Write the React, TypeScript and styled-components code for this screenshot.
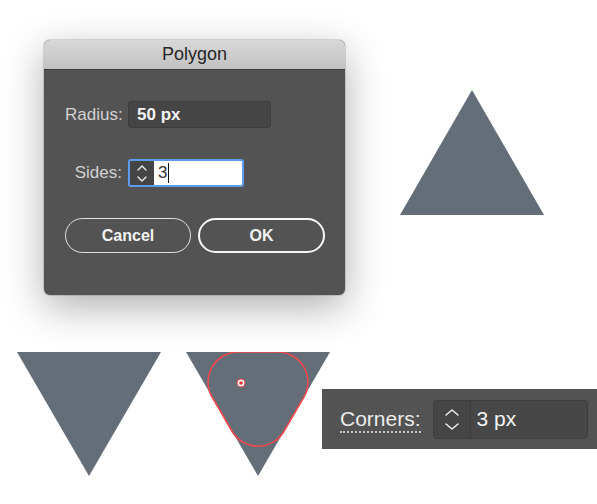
import React, { FC } from 'react';
import styled, { createGlobalStyle } from 'styled-components';

const GlobalStyle = createGlobalStyle`
  html, body {
    margin: 0;
    padding: 0;
    background: #ffffff;
    overflow: hidden;
  }
  body {
    font-family: "Liberation Sans", Arial, sans-serif;
  }
`;

const SHAPE = '#636e79';

const Page = styled.div`
  width: 597px;
  height: 504px;
  display: flex;
  flex-direction: column;
`;

const TopRow = styled.div`
  display: flex;
  align-items: flex-start;
  padding: 40px 0 0 44px;
`;

const BottomRow = styled.div`
  display: flex;
  align-items: flex-start;
  padding: 57px 0 0 17px;
  gap: 25px;
`;

const Dialog = styled.div`
  width: 301px;
  border-radius: 6px;
  overflow: hidden;
  background: #535353;
  box-shadow: 0 12px 40px rgba(0, 0, 0, 0.32), 0 0 0 1px rgba(0, 0, 0, 0.12);
`;

const TitleBar = styled.div`
  height: 29px;
  display: flex;
  align-items: center;
  justify-content: center;
  background: linear-gradient(#d8d8d8, #c2c2c2);
  border-bottom: 1px solid #3c3c3c;
  font-size: 18px;
  color: #262626;
`;

const Body = styled.div`
  padding: 31px 20px 42px 21px;
  display: flex;
  flex-direction: column;
  gap: 31px;
`;

const Fields = styled.div`
  display: grid;
  grid-template-columns: 57px auto;
  column-gap: 6px;
  row-gap: 31px;
  align-items: center;
`;

const Label = styled.label`
  text-align: right;
  font-size: 17px;
  color: #d2d2d2;
  white-space: nowrap;
`;

const TextField = styled.div<{ $width: number }>`
  width: ${({ $width }) => $width}px;
  height: 27px;
  box-sizing: border-box;
  background: #454545;
  border: 1px solid #3d3d3d;
  border-radius: 3px;
  display: flex;
  align-items: center;
  padding-left: 8px;
  font-size: 17px;
  font-weight: bold;
  color: #f4f4f4;
`;

const FocusedStepper = styled.div`
  width: 116px;
  height: 28px;
  box-sizing: border-box;
  border: 2px solid #5b9cec;
  border-radius: 3px;
  display: flex;
  overflow: hidden;
`;

const StepButtons = styled.div<{ $width: number; $divider?: string }>`
  width: ${({ $width }) => $width}px;
  flex-shrink: 0;
  display: flex;
  align-items: center;
  justify-content: center;
  background: #454545;
  border-right: 1px solid ${({ $divider }) => $divider || 'transparent'};
`;

const WhiteInput = styled.div`
  flex: 1;
  background: #ffffff;
  display: flex;
  align-items: center;
  padding-left: 4px;
  font-size: 17px;
  color: #333333;
`;

const Caret = styled.span`
  display: inline-block;
  width: 1px;
  height: 20px;
  background: #111111;
  margin-left: 1px;
`;

const Buttons = styled.div`
  display: flex;
  gap: 7px;
`;

const PillButton = styled.button<{ $primary?: boolean }>`
  width: ${({ $primary }) => ($primary ? 127 : 126)}px;
  height: 35px;
  box-sizing: border-box;
  border-radius: 18px;
  background: transparent;
  border: ${({ $primary }) => ($primary ? '2px solid #f6f6f6' : '1px solid #e2e2e2')};
  color: #f2f2f2;
  font-family: inherit;
  font-size: 16px;
  font-weight: bold;
  padding: 0;
`;

const TriangleSvg = styled.svg<{ $mt?: number; $ml?: number }>`
  display: block;
  flex-shrink: 0;
  margin-top: ${({ $mt }) => $mt || 0}px;
  margin-left: ${({ $ml }) => $ml || 0}px;
`;

const CornersPanel = styled.div`
  margin-top: 37px;
  margin-left: -33px;
  flex: 1;
  height: 60px;
  background: #535353;
  display: flex;
  align-items: center;
  padding-left: 18px;
  gap: 12px;
`;

const CornersLabel = styled.span`
  font-size: 21px;
  color: #ececec;
  line-height: 22px;
  border-bottom: 2px dotted #c8c8c8;
  padding-bottom: 1px;
  margin-top: 3px;
`;

const CornersField = styled.div`
  width: 155px;
  height: 39px;
  box-sizing: border-box;
  background: #474747;
  border: 1px solid #3d3d3d;
  border-radius: 4px;
  display: flex;
  overflow: hidden;
`;

const CornersValue = styled.div`
  flex: 1;
  display: flex;
  align-items: center;
  padding-left: 6px;
  font-size: 21px;
  color: #f4f4f4;
`;

const Chevrons: FC<{ w: number; h: number; gap: number; stroke?: number }> = ({ w, h, gap, stroke = 1.3 }) => {
  const total = h * 2 + gap;
  return (
    <svg width={w + 2} height={total + 2} viewBox={`-1 -1 ${w + 2} ${total + 2}`}>
      <path
        d={`M0 ${h} L${w / 2} 0 L${w} ${h} M0 ${h + gap} L${w / 2} ${total} L${w} ${h + gap}`}
        fill="none"
        stroke="#f0f0f0"
        strokeWidth={stroke}
        strokeLinecap="round"
        strokeLinejoin="round"
      />
    </svg>
  );
};

const UpTriangle: FC = () => (
  <TriangleSvg width="144" height="125" viewBox="0 0 144 125" $mt={50} $ml={55}>
    <polygon points="72,0 144,125 0,125" fill={SHAPE} />
  </TriangleSvg>
);

const DownTriangle: FC<{ rounded?: boolean }> = ({ rounded }) => (
  <TriangleSvg width="144" height="124" viewBox="0 0 144 124">
    <polygon points="0,0 144,0 72,124" fill={SHAPE} />
    {rounded && (
      <>
        <path
          d="M52 0 L92 0 A30 30 0 0 1 117.9 45 L98.1 79 A30 30 0 0 1 45.9 79 L26.1 45 A30 30 0 0 1 52 0 Z"
          fill="none"
          stroke="#f0484d"
          strokeWidth="1.6"
        />
        <circle cx="55" cy="31" r="4" fill="#ffffff" stroke="#f0484d" strokeWidth="1" />
        <circle cx="55" cy="31" r="1.8" fill="#e8343a" />
      </>
    )}
  </TriangleSvg>
);

export default function App() {
  return (
    <>
      <GlobalStyle />
      <Page>
        <TopRow>
          <Dialog>
            <TitleBar>Polygon</TitleBar>
            <Body>
              <Fields>
                <Label>Radius:</Label>
                <TextField $width={143}>50 px</TextField>
                <Label>Sides:</Label>
                <FocusedStepper>
                  <StepButtons $width={23}>
                    <Chevrons w={8} h={4} gap={7} />
                  </StepButtons>
                  <WhiteInput>
                    3<Caret />
                  </WhiteInput>
                </FocusedStepper>
              </Fields>
              <Buttons>
                <PillButton>Cancel</PillButton>
                <PillButton $primary>OK</PillButton>
              </Buttons>
            </Body>
          </Dialog>
          <UpTriangle />
        </TopRow>
        <BottomRow>
          <DownTriangle />
          <DownTriangle rounded />
          <CornersPanel>
            <CornersLabel>Corners:</CornersLabel>
            <CornersField>
              <StepButtons $width={36} $divider="#3a3a3a">
                <Chevrons w={12} h={5} gap={9} stroke={1.5} />
              </StepButtons>
              <CornersValue>3 px</CornersValue>
            </CornersField>
          </CornersPanel>
        </BottomRow>
      </Page>
    </>
  );
}
